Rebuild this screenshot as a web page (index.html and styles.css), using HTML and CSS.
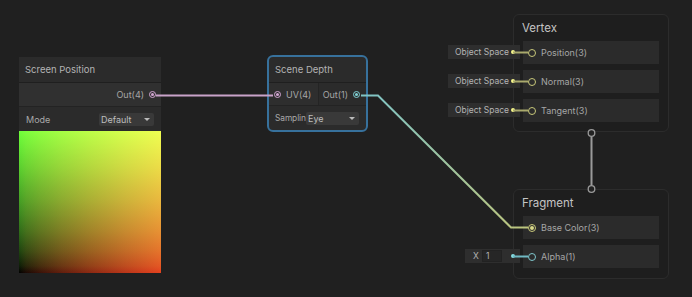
FILE: index.html
```html
<!DOCTYPE html>
<html>
<head>
<meta charset="utf-8">
<link rel="stylesheet" href="styles.css">
</head>
<body>
<div class="canvas">
  <div class="node sp">
    <div class="node-title">Screen Position</div>
    <div class="ports single">
      <div class="outputs"><span>Out(4)</span><i class="port pink"></i></div>
    </div>
    <div class="prop"><span class="prop-label">Mode</span><div class="dd wide">Default<i class="caret"></i></div></div>
    <div class="preview"></div>
  </div>

  <div class="node sd">
    <div class="node-title">Scene Depth</div>
    <div class="ports">
      <div class="inputs"><i class="port pink"></i><span>UV(4)</span></div>
      <div class="outputs"><span>Out(1)</span><i class="port teal"></i></div>
    </div>
    <div class="prop"><span class="prop-label tight">Samplin</span><div class="dd">Eye<i class="caret"></i></div></div>
  </div>

  <div class="ctx vertex">
    <div class="ctx-title">Vertex</div>
    <div class="slots">
      <div class="slot"><div class="inline">Object Space<i class="dot yellow"></i></div><i class="ring yellow"></i><span>Position(3)</span></div>
      <div class="slot"><div class="inline">Object Space<i class="dot yellow"></i></div><i class="ring yellow"></i><span>Normal(3)</span></div>
      <div class="slot"><div class="inline">Object Space<i class="dot yellow"></i></div><i class="ring yellow"></i><span>Tangent(3)</span></div>
    </div>
  </div>

  <div class="ctx fragment">
    <div class="ctx-title">Fragment</div>
    <div class="slots">
      <div class="slot"><i class="ring yellow filled"></i><span>Base Color(3)</span></div>
      <div class="slot"><div class="inline xin"><span class="xl">X</span><span class="field">1</span><i class="dot teal"></i></div><i class="ring teal"></i><span>Alpha(1)</span></div>
    </div>
  </div>

  <svg class="edges" width="692" height="297" viewBox="0 0 692 297">
    <defs>
      <linearGradient id="g1" gradientUnits="userSpaceOnUse" x1="362" y1="95" x2="528" y2="227">
        <stop offset="0" stop-color="#7fc4c6"/>
        <stop offset="1" stop-color="#bcc47c"/>
      </linearGradient>
    </defs>
    <line x1="156" y1="95.5" x2="273" y2="95.5" stroke="#c9a3c9" stroke-width="2"/>
    <path d="M361 95.5 L378 95.5 L511 227.5 L528 227.5" fill="none" stroke="url(#g1)" stroke-width="2"/>
    <g stroke="#a9a96c" stroke-width="2">
      <line x1="513" y1="52.5" x2="528" y2="52.5"/>
      <line x1="513" y1="81.5" x2="528" y2="81.5"/>
      <line x1="513" y1="110.5" x2="528" y2="110.5"/>
    </g>
    <line x1="513" y1="256.5" x2="528" y2="256.5" stroke="#6fb9c3" stroke-width="2"/>
    <line x1="591.5" y1="137" x2="591.5" y2="185" stroke="#9a9a9a" stroke-width="2"/>
    <circle cx="591.5" cy="133" r="3.3" fill="#222" stroke="#9a9a9a" stroke-width="1.3"/>
    <circle cx="591.5" cy="189" r="3.3" fill="#222" stroke="#9a9a9a" stroke-width="1.3"/>
  </svg>
</div>
</body>
</html>
```

FILE: styles.css
```css
* { box-sizing: border-box; }
html, body { margin: 0; padding: 0; }
body {
  background: #202020;
  font-family: Inter, "Noto Sans", sans-serif;
  color: #a6a6a6;
  width: 692px;
  height: 297px;
  overflow: hidden;
}
.canvas { position: relative; width: 692px; height: 297px; }

.node {
  position: absolute;
  background: #2b2b2b;
  display: flex;
  flex-direction: column;
  font-size: 9px;
}
.node.sp { left: 19px; top: 57px; width: 142px; height: 216px; }
.node.sd {
  left: 267px; top: 55px; width: 101px; height: 77px;
  border: 2px solid #37719c;
  border-radius: 6px;
  overflow: hidden;
}
.node-title {
  height: 26px;
  display: flex;
  align-items: center;
  padding-left: 6px;
  font-size: 9.5px;
  color: #b3b3b3;
  border-bottom: 1px solid #1f1f1f;
}
.node.sd .node-title { height: 26px; padding-left: 6px; }
.ports {
  height: 24px;
  display: flex;
  border-bottom: 1px solid #232323;
}
.inputs {
  width: 50px;
  background: #2e2e2e;
  display: flex;
  align-items: center;
  gap: 5px;
  padding-left: 5px;
  border-right: 1px solid #242424;
}
.outputs {
  flex: 1;
  background: #303030;
  display: flex;
  align-items: center;
  justify-content: flex-end;
  gap: 5px;
  padding-right: 5px;
}
.node.sd .outputs { background: #2b2b2b; padding-right: 6px; }
.port {
  width: 7px; height: 7px;
  border-radius: 50%;
  border: 1.3px solid;
  display: flex; align-items: center; justify-content: center;
}
.port::after { content: ""; width: 3px; height: 3px; border-radius: 50%; background: currentColor; }
.port.pink { color: #d3a6d3; }
.port.teal { color: #7fd0d3; }

.prop {
  height: 24px;
  display: flex;
  align-items: center;
  padding: 0 7px;
  justify-content: space-between;
}
.node.sd .prop { padding: 0 7px 0 6px; }
.prop-label { color: #a8a8a8; }
.prop-label.tight { width: 31px; font-size: 8.4px; white-space: nowrap; letter-spacing: -0.1px; }
.dd {
  height: 13px;
  background: #393939;
  border-radius: 2px;
  display: flex;
  align-items: center;
  justify-content: space-between;
  padding: 0 4px 0 2px;
  color: #bdbdbd;
  width: 53px;
  font-size: 9px;
}
.dd.wide { width: 55px; padding-left: 2px; }
.caret {
  width: 0; height: 0;
  border-left: 3px solid transparent;
  border-right: 3px solid transparent;
  border-top: 3px solid #bbb;
}
.preview {
  flex: 1;
  background:
    linear-gradient(to right, #000 0%, #1c0804 5%, #3c1108 15%, #621c0d 30%, #8c2712 50%, #ba3419 75%, #e3401e 100%),
    linear-gradient(to top, #000 0%, #0d1f07 5%, #1d440f 15%, #2f6e19 30%, #439d24 50%, #59d12f 75%, #6dff3a 100%);
  background-blend-mode: screen;
}

.ctx {
  position: absolute;
  left: 513px;
  width: 156px;
  border: 1px solid #2c2c2c;
  border-radius: 6px;
  background: #1e1e1e;
  padding: 0 9px 10px 9px;
}
.ctx.vertex { top: 14px; height: 118px; }
.ctx.fragment { top: 189px; height: 90px; }
.ctx-title {
  height: 26px;
  display: flex;
  align-items: center;
  margin-left: -1px;
  font-size: 11.5px;
  color: #c4c4c4;
}
.slots { display: flex; flex-direction: column; gap: 6px; }
.slot {
  position: relative;
  height: 23px;
  background: #2b2b2b;
  display: flex;
  align-items: center;
  padding-left: 5px;
  gap: 5px;
  font-size: 9px;
  color: #a6a6a6;
}
.ring {
  width: 8px; height: 8px;
  border-radius: 50%;
  border: 1.5px solid;
  background: #2b2b2b;
  display: flex; align-items: center; justify-content: center;
}
.ring.yellow { color: #c8c87a; border-color: #c8c87a; }
.ring.teal { color: #7fc6cc; border-color: #7fc6cc; }
.ring.filled::after { content: ""; width: 4px; height: 4px; border-radius: 50%; background: #d9d98a; }

.inline {
  position: absolute;
  right: calc(100% + 3px);
  top: 4px;
  height: 14px;
  width: 72px;
  background: #2e2e2e;
  display: flex;
  align-items: center;
  justify-content: space-between;
  padding: 0 5px 0 7px;
  font-size: 8.5px;
  color: #b4b4b4;
  white-space: nowrap;
}
.inline.xin { width: 55px; padding: 0 5px 0 8px; justify-content: flex-start; gap: 3px; }
.xl { width: 6px; }
.field {
  width: 20px;
  height: 12px;
  background: #262626;
  border: 1px solid #222;
  padding-left: 3px;
  display: flex; align-items: center;
  margin-right: auto;
}
.dot { width: 4px; height: 4px; border-radius: 50%; }
.dot.yellow { background: #f4f48a; }
.dot.teal { background: #86dde2; }

.edges { position: absolute; left: 0; top: 0; pointer-events: none; }
```
